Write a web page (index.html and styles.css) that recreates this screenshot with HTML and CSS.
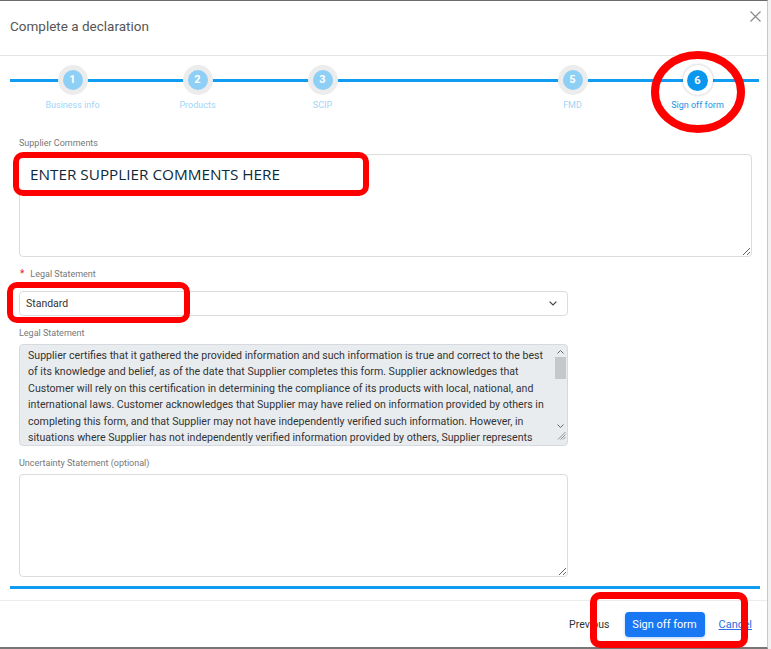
FILE: index.html
```html
<!DOCTYPE html>
<html lang="en">
<head>
<meta charset="utf-8">
<title>Complete a declaration</title>
<link rel="stylesheet" href="styles.css">
</head>
<body>
<div class="modal">
  <header class="modal-header">
    <h1 class="title">Complete a declaration</h1>
    <button class="close" aria-label="Close">
      <svg width="11" height="11" viewBox="0 0 11 11"><path d="M0.5 0.5 L10.5 10.5 M10.5 0.5 L0.5 10.5" stroke="#8a8a8a" stroke-width="1.2" fill="none"/></svg>
    </button>
  </header>

  <nav class="stepper">
    <div class="step"><span class="dot"><span class="num">1</span></span><span class="step-label">Business info</span></div>
    <div class="step"><span class="dot"><span class="num">2</span></span><span class="step-label">Products</span></div>
    <div class="step"><span class="dot"><span class="num">3</span></span><span class="step-label">SCIP</span></div>
    <div class="step step-hidden"><span class="dot"><span class="num">4</span></span><span class="step-label">Other</span></div>
    <div class="step"><span class="dot"><span class="num">5</span></span><span class="step-label">FMD</span></div>
    <div class="step step-active"><span class="dot"><span class="num">6</span></span><span class="step-label">Sign off form</span></div>
  </nav>

  <main class="form">
    <label class="field-label label-first">Supplier Comments</label>
    <textarea class="ta ta-wide"></textarea>

    <label class="field-label label-gap"><span class="star">*</span>Legal Statement</label>
    <div class="select">
      <span>Standard</span>
      <svg width="8" height="5" viewBox="0 0 8 5"><path d="M0.6 0.6 L4 4 L7.4 0.6" stroke="#444" stroke-width="1.2" fill="none"/></svg>
    </div>

    <label class="field-label label-gap-small">Legal Statement</label>
    <div class="legal">
      <div class="legal-text">
        <span class="line">Supplier certifies that it gathered the provided information and such information is true and correct to the best</span>
        <span class="line">of its knowledge and belief, as of the date that Supplier completes this form. Supplier acknowledges that</span>
        <span class="line">Customer will rely on this certification in determining the compliance of its products with local, national, and</span>
        <span class="line">international laws. Customer acknowledges that Supplier may have relied on information provided by others in</span>
        <span class="line">completing this form, and that Supplier may not have independently verified such information. However, in</span>
        <span class="line">situations where Supplier has not independently verified information provided by others, Supplier represents</span>
      </div>
      <div class="scrollbar">
        <svg class="arrow-up" width="7" height="4" viewBox="0 0 7 4"><path d="M0.5 3.5 L3.5 0.5 L6.5 3.5" stroke="#666" stroke-width="1" fill="none"/></svg>
        <span class="thumb"></span>
        <svg class="arrow-down" width="7" height="4" viewBox="0 0 7 4"><path d="M0.5 0.5 L3.5 3.5 L6.5 0.5" stroke="#666" stroke-width="1" fill="none"/></svg>
        <svg class="grip" width="9" height="9" viewBox="0 0 9 9"><path d="M8.5 1 L1 8.5 M8.5 3.5 L3.5 8.5 M8.5 6 L6 8.5" stroke="#888" stroke-width="0.9" fill="none"/></svg>
      </div>
    </div>

    <label class="field-label label-gap-small">Uncertainty Statement (optional)</label>
    <textarea class="ta ta-narrow"></textarea>
  </main>

  <div class="progress"></div>

  <footer class="modal-footer">
    <span class="prev">Previous</span>
    <button class="btn-primary">Sign off form</button>
    <a class="cancel" href="#">Cancel</a>
  </footer>

  <div class="anno anno-comments"><span class="anno-text">ENTER SUPPLIER COMMENTS HERE</span></div>
  <div class="anno anno-select"></div>
  <div class="anno anno-footer"></div>
  <svg class="anno-ring" width="771" height="649" viewBox="0 0 771 649">
    <ellipse cx="698" cy="92" rx="43" ry="37" stroke="#ff0000" stroke-width="8" fill="none"/>
  </svg>
</div>
</body>
</html>
```

FILE: styles.css
```css
html, body {
  margin: 0;
  padding: 0;
}

body {
  background: #f2f2f2;
  font-family: Roboto, "Liberation Sans", sans-serif;
  width: 771px;
  height: 649px;
  overflow: hidden;
}

.modal {
  position: relative;
  width: 768px;
  height: 649px;
  box-sizing: border-box;
  background: #fff;
  border-top: 1px solid #6b6b6b;
  border-bottom: 2px solid #777;
  border-right: 1px solid #c9c9c9;
  display: flex;
  flex-direction: column;
}

/* Header */
.modal-header {
  height: 55px;
  box-sizing: border-box;
  border-bottom: 1px solid #e4e4e4;
  display: flex;
  justify-content: space-between;
  align-items: flex-start;
  padding: 0 6px 0 10px;
  flex-shrink: 0;
}

.title {
  margin: 0;
  padding-top: 16px;
  font-size: 13.5px;
  line-height: 19px;
  font-weight: 400;
  color: #555;
}

.close {
  margin-top: 10px;
  padding: 0;
  border: none;
  background: none;
  width: 11px;
  height: 11px;
  display: flex;
}

/* Stepper */
.stepper {
  position: relative;
  height: 76px;
  box-sizing: border-box;
  padding: 9px 9px 0 10px;
  display: grid;
  grid-template-columns: repeat(6, 125px);
  align-items: start;
  flex-shrink: 0;
}

.stepper::before {
  content: "";
  position: absolute;
  left: 10px;
  right: 8px;
  top: 23px;
  height: 3px;
  background: #109cf1;
}

.step {
  display: flex;
  flex-direction: column;
  align-items: center;
  position: relative;
  z-index: 1;
}

.dot {
  width: 30px;
  height: 30px;
  border-radius: 50%;
  background: #ececec;
  display: flex;
  align-items: center;
  justify-content: center;
}

.num {
  width: 20px;
  height: 20px;
  border-radius: 50%;
  background: #8ecff6;
  color: #fff;
  font-size: 11px;
  font-weight: 700;
  line-height: 20px;
  text-align: center;
}

.step-label {
  margin-top: 5px;
  font-size: 9px;
  line-height: 11px;
  color: #9ed5f7;
  white-space: nowrap;
}

.step-active .dot {
  background: #fff;
  box-shadow: 0 0 3px rgba(0, 0, 0, 0.28);
}

.step-active .num {
  background: #0b97ee;
  width: 21px;
  height: 21px;
  line-height: 21px;
}

.step-active .step-label {
  color: #1d92e6;
}

.step-hidden {
  visibility: hidden;
}

/* Form */
.form {
  padding: 0 16px 0 19px;
  display: flex;
  flex-direction: column;
  align-items: flex-start;
  flex-shrink: 0;
}

.field-label {
  display: block;
  font-size: 9px;
  line-height: 12px;
  color: #777;
  margin: 0 0 5px;
}

.label-first {
  margin-top: 5px;
}

.label-gap {
  margin-top: 11px;
  margin-bottom: 11px;
}

.label-gap-small {
  margin-top: 11px;
}

.star {
  color: #e02424;
  font-size: 10px;
  margin-left: 1px;
  margin-right: 6px;
}

.ta {
  display: block;
  box-sizing: border-box;
  border: 1px solid #dcdcdc;
  border-radius: 4px;
  height: 103px;
  resize: vertical;
  font-family: Roboto, "Liberation Sans", sans-serif;
  font-size: 11px;
  margin: 0;
  background: #fff;
}

.ta-wide {
  width: 733px;
}

.ta-narrow {
  width: 549px;
}

.select {
  width: 549px;
  height: 25px;
  box-sizing: border-box;
  border: 1px solid #dcdcdc;
  border-radius: 4px;
  display: flex;
  align-items: center;
  justify-content: space-between;
  padding: 0 10px 0 6px;
  font-size: 10.5px;
  color: #333;
}

/* Legal statement box */
.legal {
  width: 549px;
  height: 102px;
  box-sizing: border-box;
  border: 1px solid #d6dade;
  border-radius: 4px;
  background: #e9ecef;
  display: flex;
  overflow: hidden;
}

.legal-text {
  flex: 1;
  padding: 3px 0 0 8px;
  font-size: 10.6px;
  line-height: 16.4px;
  color: #333;
  white-space: nowrap;
  overflow: hidden;
}

.line {
  display: block;
}

.scrollbar {
  width: 13px;
  display: flex;
  flex-direction: column;
  align-items: center;
  position: relative;
}

.arrow-up {
  margin-top: 5px;
}

.thumb {
  margin-top: 3px;
  width: 11px;
  height: 22px;
  background: #c5c7c9;
}

.arrow-down {
  margin-top: 45px;
}

.grip {
  margin-top: 3px;
  margin-left: 2px;
}

/* Progress line */
.progress {
  margin: 9px 7px 0 10px;
  height: 3px;
  background: #109cf1;
  flex-shrink: 0;
}

/* Footer */
.modal-footer {
  margin-top: 11px;
  border-top: 1px solid #ececec;
  flex: 1;
  display: flex;
  align-items: center;
  justify-content: flex-end;
  padding-right: 15px;
}

.prev {
  font-size: 10.5px;
  color: #333;
  margin-right: 15px;
}

.btn-primary {
  width: 80px;
  height: 25px;
  border: none;
  border-radius: 4px;
  background: #1877f2;
  color: #fff;
  font-family: Roboto, "Liberation Sans", sans-serif;
  font-size: 11px;
  padding: 0;
  box-shadow: 0 1px 3px rgba(24, 119, 242, 0.35);
}

.cancel {
  margin-left: 14px;
  font-size: 11px;
  color: #2b6de0;
  text-decoration: underline;
}

/* Annotations */
.anno {
  position: absolute;
  box-sizing: border-box;
  border: 6px solid #ff0000;
  border-radius: 10px;
}

.anno-comments {
  left: 13px;
  top: 151px;
  width: 356px;
  height: 44px;
  background: #fff;
  display: flex;
  align-items: center;
  padding-left: 11px;
}

.anno-text {
  font-family: "Open Sans", "Liberation Sans", sans-serif;
  font-size: 15.3px;
  color: #0e2a3a;
  white-space: nowrap;
}

.anno-select {
  left: 7px;
  top: 281px;
  width: 183px;
  height: 41px;
}

.anno-footer {
  left: 590px;
  top: 591px;
  width: 158px;
  height: 56px;
  border-width: 7px;
}

.anno-ring {
  position: absolute;
  left: 0;
  top: -1px;
  pointer-events: none;
}
```
